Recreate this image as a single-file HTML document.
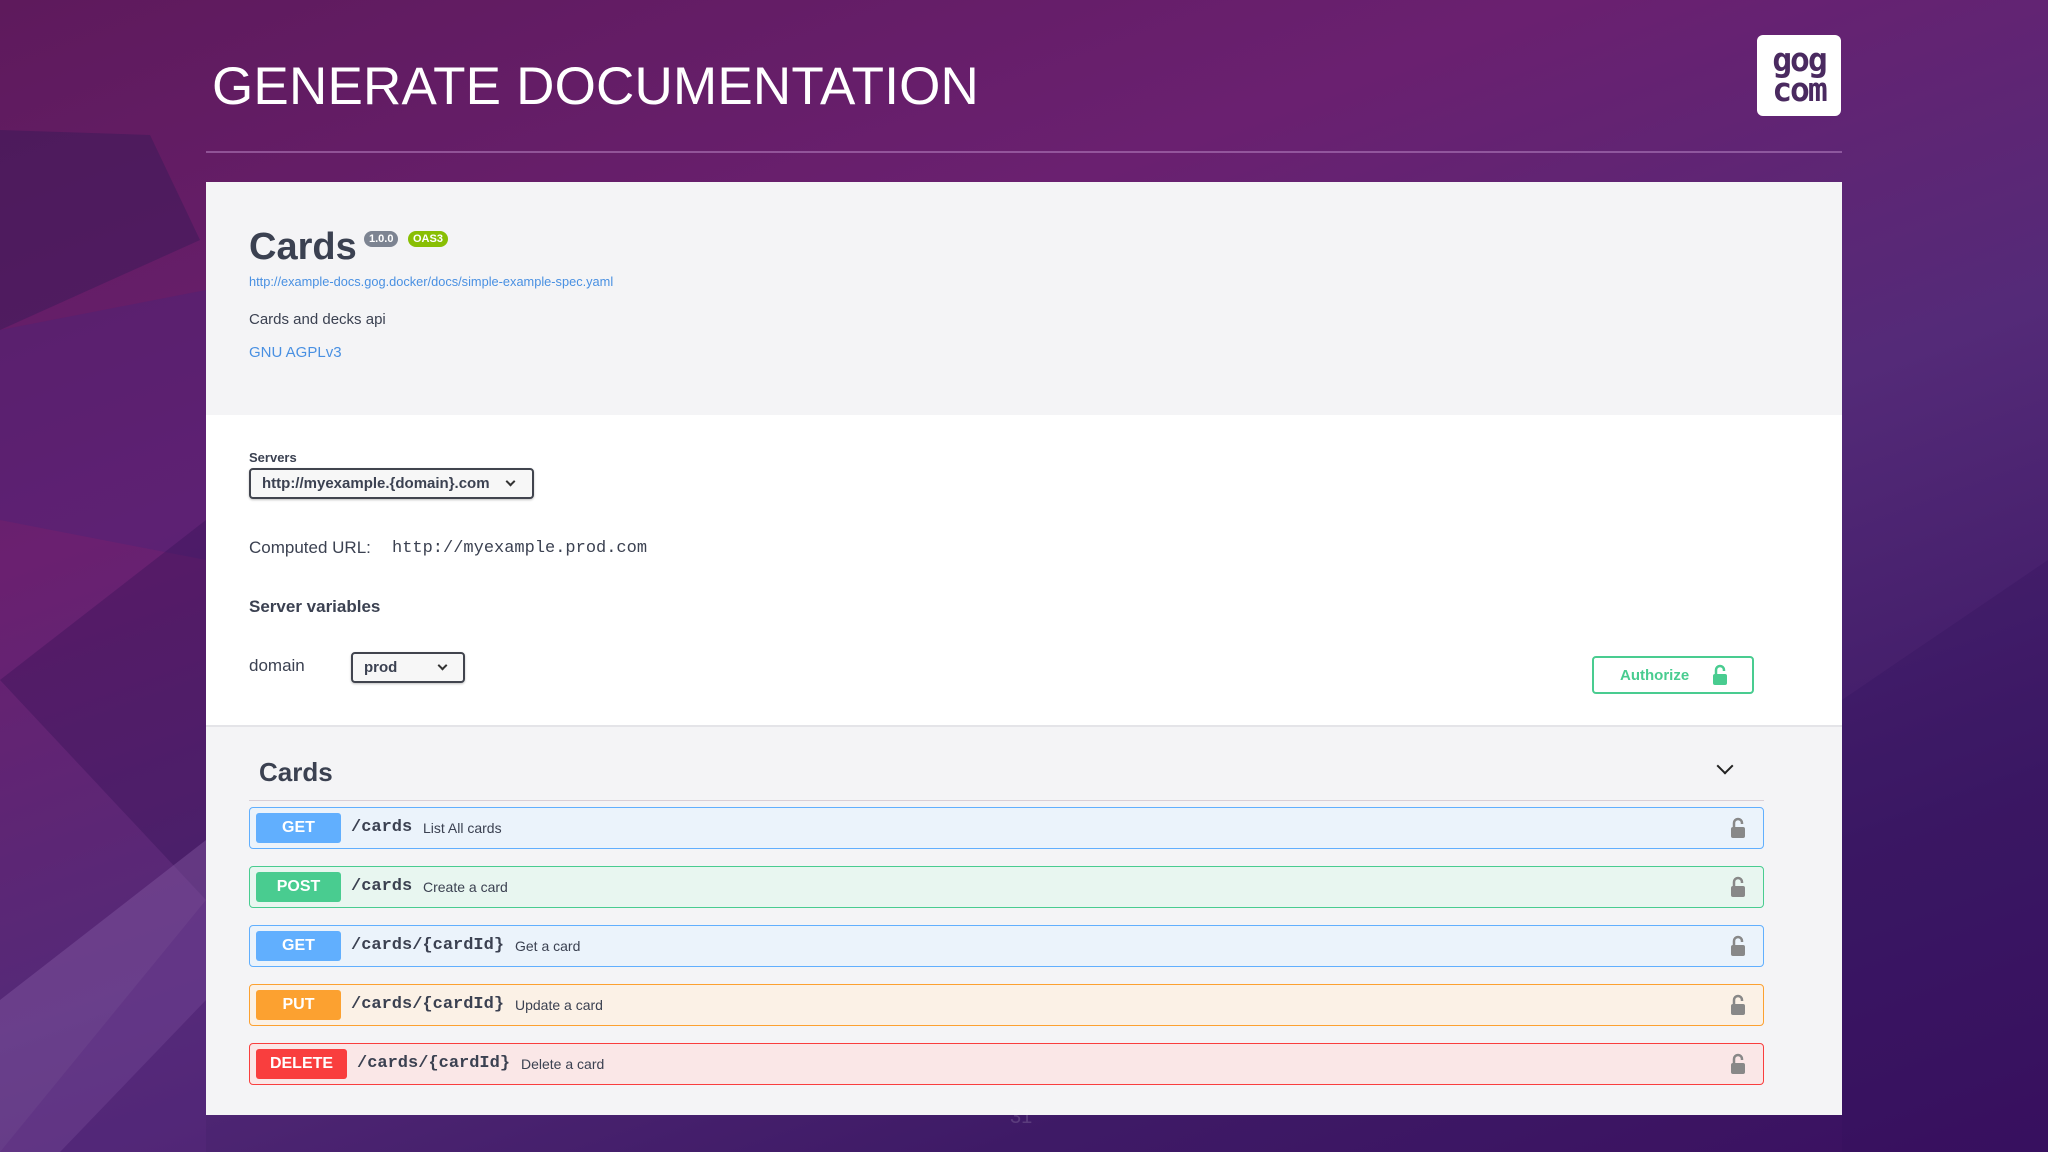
<!DOCTYPE html>
<html><head><meta charset="utf-8"><style>
*{margin:0;padding:0;box-sizing:border-box}
body{width:2048px;height:1152px;overflow:hidden;position:relative;font-family:"Liberation Sans",sans-serif;
background:linear-gradient(160deg,#5e1a5c 0%,#6a2070 30%,#542a78 55%,#3e1a66 80%,#3a1060 100%);}
.bg{position:absolute;left:0;top:0}
h1{position:absolute;left:212px;top:56px;font-weight:400;font-size:53px;color:#fff;letter-spacing:0.2px}
.rule{position:absolute;left:206px;top:151px;width:1636px;height:2px;background:rgba(200,150,210,.45)}
.logo{position:absolute;left:1757px;top:35px;width:84px;height:81px;background:#fff;border-radius:6px}
.logo span{position:absolute;left:0;width:84px;text-align:center;font-family:"DejaVu Sans Mono",monospace;font-weight:bold;color:#4a2a60;font-size:33px;letter-spacing:-2px;line-height:30px}
.panel{position:absolute;left:206px;top:182px;width:1636px;height:933px;background:#fff;overflow:hidden}
.info{position:absolute;left:0;top:0;width:1636px;height:233px;background:#f4f4f6}
.t{position:absolute;white-space:nowrap;color:#3b4151}
.mono{font-family:"Liberation Mono",monospace}
.sel{position:absolute;border:2px solid #41444e;border-radius:4px;background:#f7f7f7;box-shadow:0 1px 2px rgba(0,0,0,.25);font-weight:bold;font-size:15px;color:#3b4151}
.chev{position:absolute;width:7px;height:7px;border-right:2px solid #333;border-bottom:2px solid #333;transform:rotate(45deg)}
.ops{position:absolute;left:0;top:543px;width:1636px;height:390px;background:#f4f4f6;border-top:2px solid #e4e4e8}
.row{position:absolute;left:43px;width:1515px;height:42px;border:1.5px solid;border-radius:4px}
.badge{position:absolute;left:6px;top:5px;height:30px;border-radius:3px;color:#fff;font-weight:bold;font-size:16px;text-align:center;line-height:30px}
.path{position:absolute;top:10px;font-family:"Liberation Mono",monospace;font-weight:bold;font-size:17px;color:#3b4151}
.desc{position:absolute;top:12px;font-size:14px;color:#3b4151}
.lock{position:absolute;right:17px;top:9px}
</style></head><body>
<svg class="bg" width="2048" height="1152">
<polygon points="0,130 150,135 200,240 0,330" fill="#3a1a58" opacity=".5"/>
<polygon points="0,330 206,290 206,560 0,520" fill="#4a2278" opacity=".4"/>
<polygon points="0,680 206,520 206,900" fill="#2a0e50" opacity=".3"/>
<polygon points="0,1000 206,840 206,1000 60,1152 0,1152" fill="#8a60a8" opacity=".4"/>
<polygon points="206,900 0,1152 206,1152" fill="#5a2a80" opacity=".4"/>
<polygon points="1842,700 2048,560 2048,1152 1842,1152" fill="#2e0e5a" opacity=".25"/>
</svg>
<h1>GENERATE DOCUMENTATION</h1>
<div class="rule"></div>
<div class="logo"><span style="top:10px">gog</span><span style="top:40px">com</span></div>
<div class="panel">
 <div class="info">
  <div class="t" style="left:43px;top:44px;font-size:38px;font-weight:bold">Cards</div>
  <div class="t" style="left:158px;top:49px;background:#7d8492;color:#fff;font-size:11px;font-weight:bold;border-radius:9px;padding:2px 5px">1.0.0</div>
  <div class="t" style="left:202px;top:49px;background:#89bf04;color:#fff;font-size:11px;font-weight:bold;border-radius:9px;padding:2px 5px">OAS3</div>
  <div class="t" style="left:43px;top:92px;font-size:12.8px;color:#4990e2">http://example-docs.gog.docker/docs/simple-example-spec.yaml</div>
  <div class="t" style="left:43px;top:129px;font-size:15px">Cards and decks api</div>
  <div class="t" style="left:43px;top:162px;font-size:15px;color:#4990e2">GNU AGPLv3</div>
 </div>
 <div class="t" style="left:43px;top:268px;font-size:13px;font-weight:bold">Servers</div>
 <div class="sel" style="left:43px;top:286px;width:285px;height:31px"><span style="position:absolute;left:11px;top:5px">http://myexample.{domain}.com</span><div class="chev" style="left:256px;top:8px"></div></div>
 <div class="t" style="left:43px;top:356px;font-size:17px">Computed URL:</div>
 <div class="t mono" style="left:186px;top:357px;font-size:17px">http://myexample.prod.com</div>
 <div class="t" style="left:43px;top:415px;font-size:17px;font-weight:bold">Server variables</div>
 <div class="t" style="left:43px;top:474px;font-size:17px">domain</div>
 <div class="sel" style="left:145px;top:470px;width:114px;height:31px"><span style="position:absolute;left:11px;top:5px">prod</span><div class="chev" style="left:86px;top:8px"></div></div>
 <div style="position:absolute;left:1386px;top:474px;width:162px;height:38px;border:2px solid #49cc90;border-radius:4px">
  <span class="t" style="left:26px;top:9px;font-size:15px;font-weight:bold;color:#49cc90">Authorize</span>
  <svg style="position:absolute;left:118px;top:6px" width="16" height="22" viewBox="0 0 16 22"><path d="M4 10V6a4 4 0 0 1 8 0v1" fill="none" stroke="#49cc90" stroke-width="2.5"/><rect x="1" y="10" width="14" height="11" rx="2" fill="#49cc90"/></svg>
 </div>
 <div class="ops">
  <div class="t" style="left:53px;top:30px;font-size:26px;font-weight:bold">Cards</div>
  <div class="chev" style="left:1513px;top:33px;width:12px;height:12px;border-width:0 2px 2px 0;border-color:#222"></div>
  <div style="position:absolute;left:43px;top:73px;width:1515px;height:1px;background:#d9cfd6"></div>
  <div class="row" style="top:80px;background:#ebf3fb;border-color:#61affe"><div class="badge" style="width:85px;background:#61affe">GET</div><div class="path" style="left:101px">/cards</div><div class="desc" style="left:173px">List All cards</div><svg class="lock" width="16" height="22" viewBox="0 0 16 22"><path d="M4 10V6a4 4 0 0 1 8 0v1" fill="none" stroke="#888" stroke-width="2.5"/><rect x="1" y="10" width="14" height="11" rx="2" fill="#888"/></svg></div>
  <div class="row" style="top:139px;background:#e8f6f0;border-color:#49cc90"><div class="badge" style="width:85px;background:#49cc90">POST</div><div class="path" style="left:101px">/cards</div><div class="desc" style="left:173px">Create a card</div><svg class="lock" width="16" height="22" viewBox="0 0 16 22"><path d="M4 10V6a4 4 0 0 1 8 0v1" fill="none" stroke="#888" stroke-width="2.5"/><rect x="1" y="10" width="14" height="11" rx="2" fill="#888"/></svg></div>
  <div class="row" style="top:198px;background:#ebf3fb;border-color:#61affe"><div class="badge" style="width:85px;background:#61affe">GET</div><div class="path" style="left:101px">/cards/{cardId}</div><div class="desc" style="left:265px">Get a card</div><svg class="lock" width="16" height="22" viewBox="0 0 16 22"><path d="M4 10V6a4 4 0 0 1 8 0v1" fill="none" stroke="#888" stroke-width="2.5"/><rect x="1" y="10" width="14" height="11" rx="2" fill="#888"/></svg></div>
  <div class="row" style="top:257px;background:#fbf1e6;border-color:#fca130"><div class="badge" style="width:85px;background:#fca130">PUT</div><div class="path" style="left:101px">/cards/{cardId}</div><div class="desc" style="left:265px">Update a card</div><svg class="lock" width="16" height="22" viewBox="0 0 16 22"><path d="M4 10V6a4 4 0 0 1 8 0v1" fill="none" stroke="#888" stroke-width="2.5"/><rect x="1" y="10" width="14" height="11" rx="2" fill="#888"/></svg></div>
  <div class="row" style="top:316px;background:#fae7e7;border-color:#f93e3e"><div class="badge" style="width:91px;background:#f93e3e">DELETE</div><div class="path" style="left:107px">/cards/{cardId}</div><div class="desc" style="left:271px">Delete a card</div><svg class="lock" width="16" height="22" viewBox="0 0 16 22"><path d="M4 10V6a4 4 0 0 1 8 0v1" fill="none" stroke="#888" stroke-width="2.5"/><rect x="1" y="10" width="14" height="11" rx="2" fill="#888"/></svg></div>
 </div>
</div>
<div class="t" style="left:1010px;top:1106px;font-size:20px;color:rgba(255,255,255,.15)">31</div>
</body></html>
